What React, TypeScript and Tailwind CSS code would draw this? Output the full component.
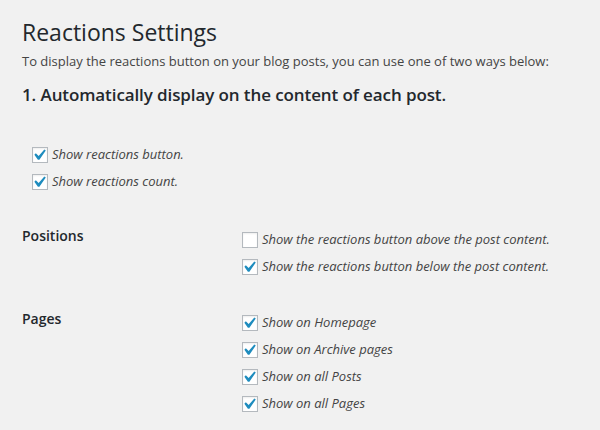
import React from "react";

function Check({ checked }: { checked: boolean }) {
  return (
    <span className="relative inline-block w-4 h-4 shrink-0 bg-white border border-[#b4b9be] shadow-[inset_0_1px_2px_rgba(0,0,0,0.07)]">
      {checked && (
        <svg
          className="absolute left-[-5px] top-[-4px]"
          width="22"
          height="22"
          viewBox="0 0 20 20"
        >
          <path
            d="M14.83 4.89l1.34.94-5.81 8.38H9.02L5.78 9.67l1.34-1.25 2.57 2.4z"
            fill="#1e8cbe"
          />
        </svg>
      )}
    </span>
  );
}

function Row({ checked, label }: { checked: boolean; label: string }) {
  return (
    <div className="flex items-center gap-1 h-[27px]">
      <Check checked={checked} />
      <span className="italic text-[13px] text-[#444]">{label}</span>
    </div>
  );
}

export default function App() {
  return (
    <div
      className="w-[600px] h-[430px] overflow-hidden bg-[#f1f1f1] text-[#23282d] pl-[22px] pt-[18px]"
      style={{ fontFamily: '"Open Sans", "Noto Sans", sans-serif' }}
    >
      <h1 className="text-[23px] leading-[29px] font-normal">Reactions Settings</h1>
      <p className="text-[13px] leading-[20px] text-[#444] mt-[4px]">
        To display the reactions button on your blog posts, you can use one of two ways below:
      </p>
      <h3 className="text-[17px] leading-[24px] font-semibold mt-[12px] tracking-[-0.1px]">
        1. Automatically display on the content of each post.
      </h3>
      <div className="mt-[34px] pl-[10px]">
        <Row checked label="Show reactions button." />
        <Row checked label="Show reactions count." />
      </div>
      <div className="mt-[27px] grid grid-cols-[220px_1fr]">
        <div className="text-[14px] leading-[27px] font-semibold">Positions</div>
        <div className="pt-[4px]">
          <Row checked={false} label="Show the reactions button above the post content." />
          <Row checked label="Show the reactions button below the post content." />
        </div>
      </div>
      <div className="mt-[25px] grid grid-cols-[220px_1fr]">
        <div className="text-[14px] leading-[27px] font-semibold">Pages</div>
        <div className="pt-[4px]">
          <Row checked label="Show on Homepage" />
          <Row checked label="Show on Archive pages" />
          <Row checked label="Show on all Posts" />
          <Row checked label="Show on all Pages" />
        </div>
      </div>
    </div>
  );
}
